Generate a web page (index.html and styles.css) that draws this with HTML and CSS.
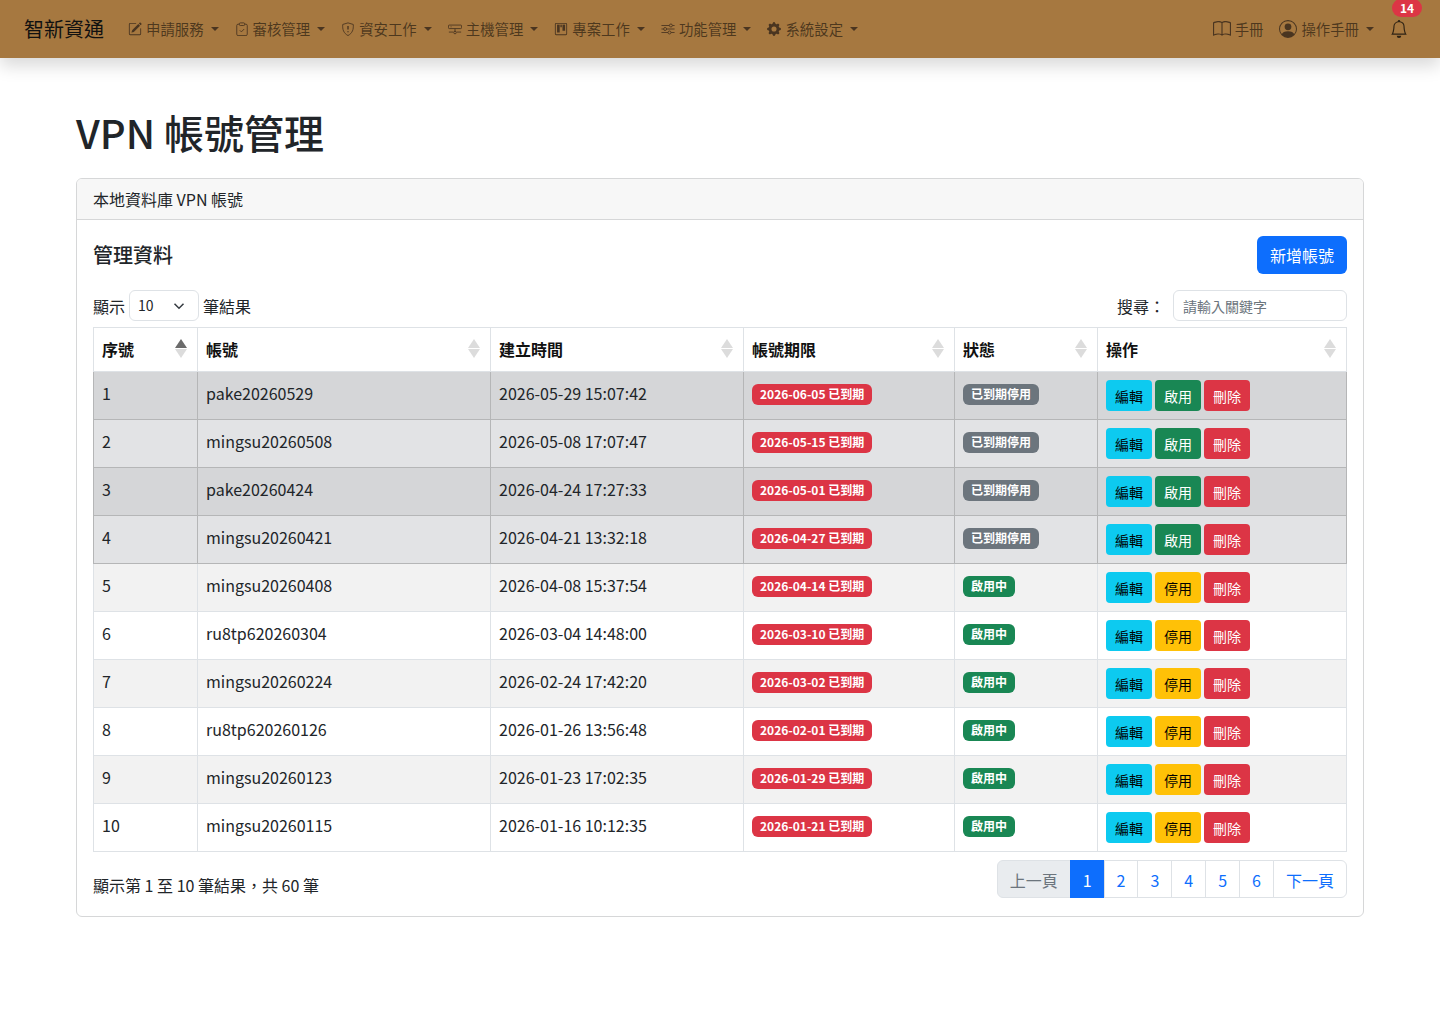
FILE: index.html
```html
<!DOCTYPE html>
<html lang="zh-Hant">
<head>
  <meta charset="UTF-8">
  <meta name="viewport" content="width=device-width, initial-scale=1.0">
  <title>VPN 帳號管理</title>
  <link rel="stylesheet" href="styles.css">
</head>
<body>
  <nav class="navbar">
    <a class="brand">智新資通</a>
    <ul class="nav-menu">
      <li class="nav-item">
        <svg class="icon" viewBox="0 0 16 16"><path d="M15.502 1.94a.5.5 0 0 1 0 .706L14.459 3.69l-2-2L13.502.646a.5.5 0 0 1 .707 0l1.293 1.293zm-1.75 2.456-2-2L4.939 9.21a.5.5 0 0 0-.121.196l-.805 2.414a.25.25 0 0 0 .316.316l2.414-.805a.5.5 0 0 0 .196-.12l6.813-6.814z"/><path fill-rule="evenodd" d="M1 13.5A1.5 1.5 0 0 0 2.5 15h11a1.5 1.5 0 0 0 1.5-1.5v-6a.5.5 0 0 0-1 0v6a.5.5 0 0 1-.5.5h-11a.5.5 0 0 1-.5-.5v-11a.5.5 0 0 1 .5-.5H9a.5.5 0 0 0 0-1H2.5A1.5 1.5 0 0 0 1 2.5v11z"/></svg>
        申請服務<span class="caret"></span>
      </li>
      <li class="nav-item">
        <svg class="icon icon-line" viewBox="0 0 16 16"><path d="M5 2.5H3.5A1.5 1.5 0 0 0 2 4v10a1.5 1.5 0 0 0 1.5 1.5h9A1.5 1.5 0 0 0 14 14V4a1.5 1.5 0 0 0-1.500-1.500H11"/><rect x="5" y="1" width="6" height="3" rx="1"/><path d="M5.500 9.500 7.300 11.300 10.500 8"/></svg>
        審核管理<span class="caret"></span>
      </li>
      <li class="nav-item">
        <svg class="icon icon-line" viewBox="0 0 16 16"><path d="M8 1 2 2.800c-.5 5.500.9 10 6 12.700 5.100-2.700 6.500-7.200 6-12.700L8 1z"/><path d="M8 4.500v4M8 10.500v1.200" stroke-width="1.600"/></svg>
        資安工作<span class="caret"></span>
      </li>
      <li class="nav-item">
        <svg class="icon icon-line" viewBox="0 0 16 16"><rect x=".5" y="3.500" width="15" height="4" rx="1"/><path d="M8 7.500v4M1 11.500h5M10 11.500h5"/><circle cx="8" cy="12" r="1.500"/><path d="M3 5.500h1"/></svg>
        主機管理<span class="caret"></span>
      </li>
      <li class="nav-item">
        <svg class="icon" viewBox="0 0 16 16"><path d="M13.500 1h-11A1.500 1.500 0 0 0 1 2.500v11A1.500 1.500 0 0 0 2.500 15h11a1.500 1.500 0 0 0 1.500-1.500v-11A1.500 1.500 0 0 0 13.500 1zm.5 12.500a.5.5 0 0 1-.5.5h-11a.5.5 0 0 1-.5-.5v-11a.5.5 0 0 1 .5-.5h11a.5.5 0 0 1 .5.5v11z"/><rect x="3.500" y="3" width="3" height="9"/><rect x="7.300" y="3" width="1.600" height="3"/><rect x="9.700" y="3" width="3" height="7"/></svg>
        專案工作<span class="caret"></span>
      </li>
      <li class="nav-item">
        <svg class="icon icon-line" viewBox="0 0 16 16"><path d="M.5 4h9M13 4h2.500M.5 8H3M6.500 8h9M.5 12h7.500M11.500 12h4"/><circle cx="11.300" cy="4" r="1.700"/><circle cx="4.700" cy="8" r="1.700"/><circle cx="9.700" cy="12" r="1.700"/></svg>
        功能管理<span class="caret"></span>
      </li>
      <li class="nav-item">
        <svg class="icon" viewBox="0 0 16 16"><path d="M9.405 1.050c-.413-1.400-2.397-1.400-2.810 0l-.1.340a1.464 1.464 0 0 1-2.105.872l-.31-.17c-1.283-.698-2.686.705-1.987 1.987l.169.311c.446.820.023 1.841-.872 2.105l-.34.1c-1.400.413-1.400 2.397 0 2.810l.34.1a1.464 1.464 0 0 1 .872 2.105l-.17.31c-.698 1.283.705 2.686 1.987 1.987l.311-.169a1.464 1.464 0 0 1 2.105.872l.1.340c.413 1.400 2.397 1.400 2.810 0l.1-.34a1.464 1.464 0 0 1 2.105-.872l.31.170c1.283.698 2.686-.705 1.987-1.987l-.169-.311a1.464 1.464 0 0 1 .872-2.105l.34-.1c1.400-.413 1.400-2.397 0-2.810l-.34-.1a1.464 1.464 0 0 1-.872-2.105l.17-.31c.698-1.283-.705-2.686-1.987-1.987l-.311.169a1.464 1.464 0 0 1-2.105-.872l-.1-.34zM8 10.930a2.929 2.929 0 1 1 0-5.860 2.929 2.929 0 0 1 0 5.858z"/></svg>
        系統設定<span class="caret"></span>
      </li>
    </ul>
    <ul class="nav-menu nav-right">
      <li class="nav-item">
        <svg class="icon icon-lg" viewBox="0 0 16 16"><path d="M1 2.828c.885-.37 2.154-.769 3.388-.893 1.330-.134 2.458.063 3.112.752v9.746c-.935-.53-2.120-.603-3.213-.493-1.180.12-2.370.461-3.287.811V2.828zm7.500-.141c.654-.689 1.782-.886 3.112-.752 1.234.124 2.503.523 3.388.893v9.923c-.918-.35-2.107-.692-3.287-.81-1.094-.111-2.278-.039-3.213.492V2.687zM8 1.783C7.015.936 5.587.81 4.287.94c-1.514.153-3.042.672-3.994 1.105A.5.5 0 0 0 0 2.500v11a.5.5 0 0 0 .707.455c.882-.4 2.303-.881 3.680-1.020 1.409-.142 2.590.087 3.223.877a.5.5 0 0 0 .78 0c.633-.79 1.814-1.019 3.222-.877 1.378.139 2.800.62 3.681 1.020A.5.5 0 0 0 16 13.500v-11a.5.5 0 0 0-.293-.455c-.952-.433-2.480-.952-3.994-1.105C10.413.809 8.985.936 8 1.783z"/></svg>
        手冊
      </li>
      <li class="nav-item">
        <svg class="icon icon-lg" viewBox="0 0 16 16"><path d="M11 6a3 3 0 1 1-6 0 3 3 0 0 1 6 0z"/><path fill-rule="evenodd" d="M0 8a8 8 0 1 1 16 0A8 8 0 0 1 0 8zm8-7a7 7 0 0 0-5.468 11.370C3.242 11.226 4.805 10 8 10s4.757 1.225 5.468 2.370A7 7 0 0 0 8 1z"/></svg>
        操作手冊<span class="caret"></span>
      </li>
      <li class="nav-bell">
        <svg class="icon icon-bell" viewBox="0 0 16 16"><path d="M8 16a2 2 0 0 0 2-2H6a2 2 0 0 0 2 2zM8 1.918l-.797.161A4.002 4.002 0 0 0 4 6c0 .628-.134 2.197-.459 3.742-.16.767-.376 1.566-.663 2.258h10.244c-.287-.692-.502-1.490-.663-2.258C12.134 8.197 12 6.628 12 6a4.002 4.002 0 0 0-3.203-3.920L8 1.917zM14.220 12c.223.447.481.801.78 1H1c.299-.199.557-.553.78-1C2.680 10.200 3 6.880 3 6c0-2.420 1.720-4.440 4.005-4.901a1 1 0 1 1 1.990 0A5.002 5.002 0 0 1 13 6c0 .880.32 4.200 1.220 6z"/></svg>
        <span class="bell-count">14</span>
      </li>
    </ul>
  </nav>

  <main class="container">
    <h1>VPN 帳號管理</h1>
    <div class="card">
      <div class="card-header">本地資料庫 VPN 帳號</div>
      <div class="card-body">
        <div class="title-row">
          <h5>管理資料</h5>
          <button class="btn-new">新增帳號</button>
        </div>
        <div class="tools-row">
          <div class="length-box">
            顯示
            <span class="fake-select">10
              <svg class="chevron" viewBox="0 0 16 16"><path d="m2 5 6 6 6-6"/></svg>
            </span>
            筆結果
          </div>
          <div class="search-box">
            <span class="search-label">搜尋：</span>
            <input class="search-input" type="text" placeholder="請輸入關鍵字">
          </div>
        </div>
        <table class="data-table">
          <thead>
            <tr>
              <th class="col-no">序號<span class="sort sort-asc"></span></th>
              <th class="col-name">帳號<span class="sort"></span></th>
              <th class="col-time">建立時間<span class="sort"></span></th>
              <th class="col-exp">帳號期限<span class="sort"></span></th>
              <th class="col-state">狀態<span class="sort"></span></th>
              <th>操作<span class="sort"></span></th>
            </tr>
          </thead>
          <tbody id="rows"></tbody>
        </table>
        <div class="foot-row">
          <div class="foot-info">顯示第 1 至 10 筆結果，共 60 筆</div>
          <ul class="pagination">
            <li class="page disabled">上一頁</li>
            <li class="page active">1</li>
            <li class="page">2</li>
            <li class="page">3</li>
            <li class="page">4</li>
            <li class="page">5</li>
            <li class="page">6</li>
            <li class="page">下一頁</li>
          </ul>
        </div>
      </div>
    </div>
  </main>

  <script>
    // Account rows shown on page one
    const accounts = [
      [1, 'pake20260529', '2026-05-29 15:07:42', '2026-06-05', true],
      [2, 'mingsu20260508', '2026-05-08 17:07:47', '2026-05-15', true],
      [3, 'pake20260424', '2026-04-24 17:27:33', '2026-05-01', true],
      [4, 'mingsu20260421', '2026-04-21 13:32:18', '2026-04-27', true],
      [5, 'mingsu20260408', '2026-04-08 15:37:54', '2026-04-14', false],
      [6, 'ru8tp620260304', '2026-03-04 14:48:00', '2026-03-10', false],
      [7, 'mingsu20260224', '2026-02-24 17:42:20', '2026-03-02', false],
      [8, 'ru8tp620260126', '2026-01-26 13:56:48', '2026-02-01', false],
      [9, 'mingsu20260123', '2026-01-23 17:02:35', '2026-01-29', false],
      [10, 'mingsu20260115', '2026-01-16 10:12:35', '2026-01-21', false]
    ];

    document.getElementById('rows').innerHTML = accounts.map(([no, name, time, exp, stopped]) => `
      <tr class="${stopped ? 'row-stopped' : ''}">
        <td>${no}</td>
        <td>${name}</td>
        <td>${time}</td>
        <td><span class="badge badge-red">${exp} 已到期</span></td>
        <td>${stopped
          ? '<span class="badge badge-gray">已到期停用</span>'
          : '<span class="badge badge-green">啟用中</span>'}</td>
        <td class="actions">
          <button class="btn btn-info">編輯</button>
          ${stopped
            ? '<button class="btn btn-success">啟用</button>'
            : '<button class="btn btn-warning">停用</button>'}
          <button class="btn btn-danger">刪除</button>
        </td>
      </tr>
    `).join('');
  </script>
</body>
</html>
```

FILE: styles.css
```css
* {
  box-sizing: border-box;
}
body {
  margin: 0;
  font-family: "Noto Sans CJK TC", "Noto Sans", sans-serif;
  font-size: 16px;
  line-height: 1.5;
  color: #212529;
  background-color: #fff;
}
ul {
  list-style: none;
  margin: 0;
  padding: 0;
}

/* navbar */
.navbar {
  display: flex;
  align-items: center;
  height: 58px;
  padding: 0 24px;
  background-color: #a67840;
  box-shadow: 0 8px 16px rgba(0, 0, 0, 0.15);
}
.brand {
  font-size: 20px;
  color: #111;
  margin-right: 16px;
  white-space: nowrap;
}
.nav-menu {
  display: flex;
  align-items: center;
}
.nav-right {
  margin-left: auto;
}
.nav-item {
  display: flex;
  align-items: center;
  padding: 0 8px;
  font-size: 14.4px;
  color: rgba(0, 0, 0, 0.55);
  white-space: nowrap;
}
.icon {
  width: 14px;
  height: 14px;
  margin-right: 4px;
  fill: #4a3520;
  flex: none;
}
.icon-line {
  fill: none;
  stroke: #4a3520;
  stroke-width: 1;
}
.icon-lg {
  width: 18px;
  height: 18px;
}
.icon-bell {
  width: 18px;
  height: 18px;
  margin: 0;
  display: block;
  fill: #2e2214;
}
.caret {
  display: inline-block;
  margin-left: 7px;
  border-top: 4px solid;
  border-left: 4px solid transparent;
  border-right: 4px solid transparent;
  color: #4a3520;
}
.nav-bell {
  position: relative;
  margin-left: 8px;
  margin-right: 8px;
}
.bell-count {
  position: absolute;
  top: -21px;
  left: 2px;
  width: 30px;
  height: 18px;
  border-radius: 9px;
  background-color: #dc3545;
  color: #fff;
  font-size: 12px;
  font-weight: 700;
  line-height: 18px;
  text-align: center;
}

/* page */
.container {
  width: 1320px;
  margin: 0 auto;
  padding: 0 16px;
}
h1 {
  margin: 0;
  padding-top: 44px;
  height: 120px;
  font-size: 40px;
  font-weight: 500;
  line-height: 60px;
}
.card {
  border: 1px solid #d6d7d8;
  border-radius: 6px;
}
.card-header {
  height: 41px;
  padding: 0 16px;
  line-height: 41px;
  background-color: #f7f7f7;
  border-bottom: 1px solid #d6d7d8;
  border-radius: 5px 5px 0 0;
}
.card-body {
  padding: 16px 16px 18px;
}
.title-row {
  display: flex;
  justify-content: space-between;
  align-items: center;
  height: 38px;
}
h5 {
  margin: 0;
  font-size: 20px;
  font-weight: 500;
}
.btn-new {
  width: 90px;
  height: 38px;
  border: none;
  border-radius: 6px;
  background-color: #0d6efd;
  color: #fff;
  font: inherit;
  cursor: pointer;
}
.tools-row {
  display: flex;
  justify-content: space-between;
  align-items: center;
  margin-top: 16px;
  height: 31px;
  margin-bottom: 6px;
}
.length-box {
  display: flex;
  align-items: center;
  gap: 4px;
}
.fake-select {
  display: flex;
  align-items: center;
  justify-content: space-between;
  width: 70px;
  height: 31px;
  padding: 0 13px 0 8px;
  border: 1px solid #dee2e6;
  border-radius: 6px;
  font-size: 14px;
}
.chevron {
  width: 12px;
  height: 12px;
  fill: none;
  stroke: #343a40;
  stroke-width: 2;
}
.search-box {
  display: flex;
  align-items: center;
}
.search-label {
  margin-right: 8px;
}
.search-input {
  width: 174px;
  height: 31px;
  padding: 0 9px;
  border: 1px solid #dee2e6;
  border-radius: 6px;
  font-family: inherit;
  font-size: 14px;
}
.search-input::placeholder {
  color: #6c757d;
}

/* table */
.data-table {
  width: 1254px;
  border-collapse: collapse;
  table-layout: fixed;
}
.data-table th, .data-table td {
  border: 1px solid #dee2e6;
  padding: 0 8px;
  text-align: left;
  vertical-align: top;
}
.data-table th {
  position: relative;
  height: 41px;
  line-height: 43px;
  font-weight: 700;
  color: #111;
}
.col-no { width: 104px; }
.col-name { width: 293px; }
.col-time { width: 253px; }
.col-exp { width: 211px; }
.col-state { width: 143px; }
.data-table td {
  height: 48px;
  padding-top: 9px;
}
.data-table tbody tr:nth-child(odd) {
  background-color: #f2f2f2;
}
.data-table tbody tr.row-stopped td {
  background-color: #e2e3e5;
  border-color: #b5b6b7;
}
.data-table tbody tr.row-stopped:nth-child(odd) td {
  background-color: #d5d6d8;
}
.sort {
  position: absolute;
  right: 10px;
  top: 11px;
  width: 12px;
  height: 20px;
}
.sort::before, .sort::after {
  content: "";
  position: absolute;
  left: 0;
  border-left: 6px solid transparent;
  border-right: 6px solid transparent;
}
.sort::before {
  top: 0;
  border-bottom: 9px solid #dcdcdc;
}
.sort::after {
  top: 10px;
  border-top: 9px solid #dcdcdc;
}
.sort-asc::before {
  border-bottom-color: #6b6b6b;
}
.badge {
  display: inline-block;
  margin-top: 3px;
  padding: 0 8px;
  height: 21px;
  border-radius: 6px;
  color: #fff;
  font-size: 12px;
  font-weight: 700;
  line-height: 20px;
  vertical-align: top;
}
.badge-red { background-color: #dc3545; }
.badge-gray { background-color: #6c757d; }
.badge-green { background-color: #198754; }
.data-table td.actions {
  padding-top: 8px;
  font-size: 0;
}
.btn {
  width: 46px;
  height: 31px;
  margin-right: 3px;
  padding: 0;
  border: none;
  border-radius: 4px;
  font-family: inherit;
  font-size: 14px;
  cursor: pointer;
}
.btn-info { background-color: #0dcaf0; color: #000; }
.btn-success { background-color: #198754; color: #fff; }
.btn-warning { background-color: #ffc107; color: #000; }
.btn-danger { background-color: #dc3545; color: #fff; }

/* footer of the table */
.foot-row {
  display: flex;
  justify-content: space-between;
  margin-top: 8px;
}
.foot-info {
  padding-top: 13px;
}
.pagination {
  display: flex;
}
.page {
  height: 38px;
  padding: 0 12px;
  min-width: 34px;
  text-align: center;
  line-height: 38px;
  border: 1px solid #dee2e6;
  margin-left: -1px;
  color: #0d6efd;
  background-color: #fff;
}
.page:first-child {
  border-radius: 6px 0 0 6px;
  margin-left: 0;
}
.page:last-child {
  border-radius: 0 6px 6px 0;
}
.page.disabled {
  background-color: #e9ecef;
  color: #6c757d;
}
.page.active {
  background-color: #0d6efd;
  border-color: #0d6efd;
  color: #fff;
}
```
